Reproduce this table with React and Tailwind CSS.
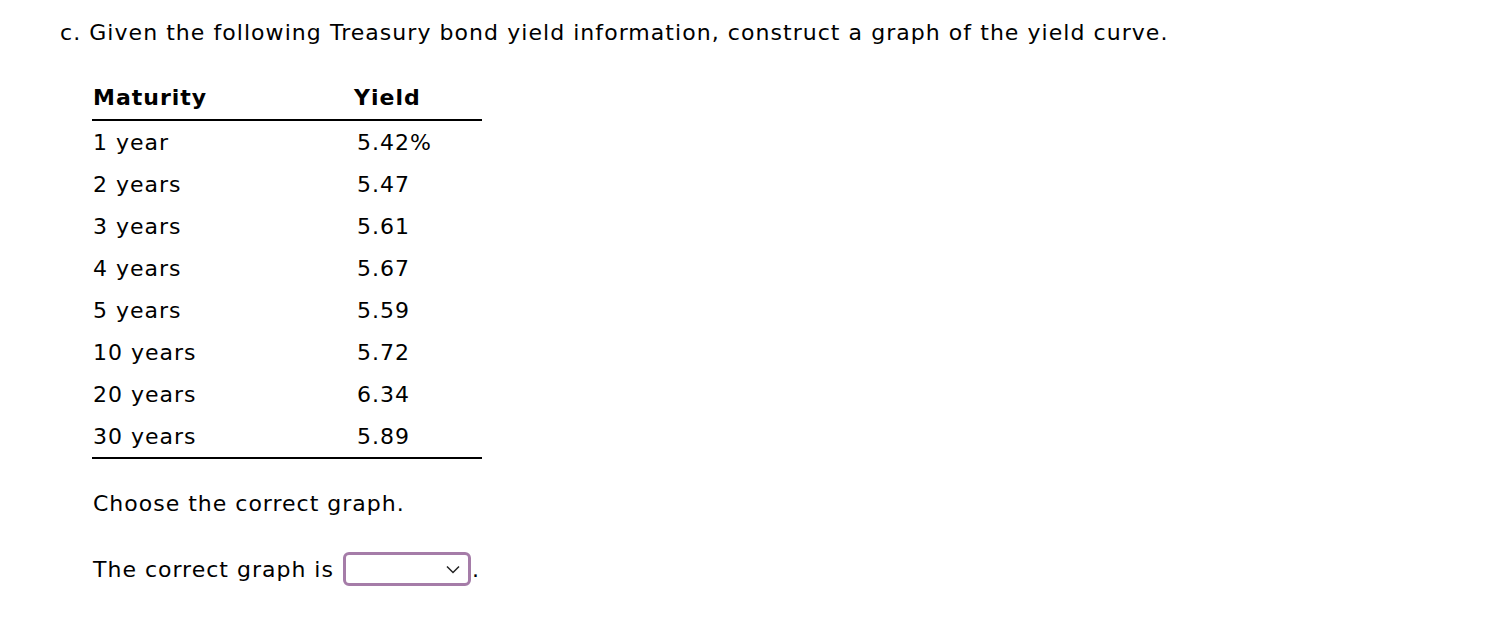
import React from "react";

const rows = [
  ["1 year", "5.42%"],
  ["2 years", "5.47"],
  ["3 years", "5.61"],
  ["4 years", "5.67"],
  ["5 years", "5.59"],
  ["10 years", "5.72"],
  ["20 years", "6.34"],
  ["30 years", "5.89"],
];

export default function App() {
  return (
    <div
      className="w-[1492px] h-[618px] bg-white text-black text-[22px] tracking-[1px]"
      style={{ fontFamily: '"DejaVu Sans", Verdana, sans-serif' }}
    >
      <div className="pl-[60px] pt-[19px] h-[75px] leading-[28px] tracking-[1.05px]">
        c. Given the following Treasury bond yield information, construct a graph of the yield curve.
      </div>
      <div className="ml-[92px] w-[390px]">
        <div className="flex h-[46px] items-center border-b-2 border-black font-bold">
          <div className="w-[262px] pl-[1px]">Maturity</div>
          <div>Yield</div>
        </div>
        <div className="border-b-2 border-black">
          {rows.map(([m, y]) => (
            <div key={m} className="flex h-[42px] items-center">
              <div className="w-[265px] pl-[1px]">{m}</div>
              <div>{y}</div>
            </div>
          ))}
        </div>
        <div className="mt-[31px] h-[28px] leading-[28px] pl-[1px]">Choose the correct graph.</div>
        <div className="mt-[34px] flex items-center pl-[1px]">
          <span>The correct graph is</span>
          <div className="ml-[9px] w-[128px] h-[34px] border-[3px] border-[#a57ca8] rounded-[6px] flex items-center justify-end pr-[8px]">
            <svg width="14" height="9" viewBox="0 0 14 9" fill="none">
              <path d="M1 1.5 L7 7.5 L13 1.5" stroke="#222" strokeWidth="1.5" />
            </svg>
          </div>
          <span className="ml-[1px]">.</span>
        </div>
      </div>
    </div>
  );
}
